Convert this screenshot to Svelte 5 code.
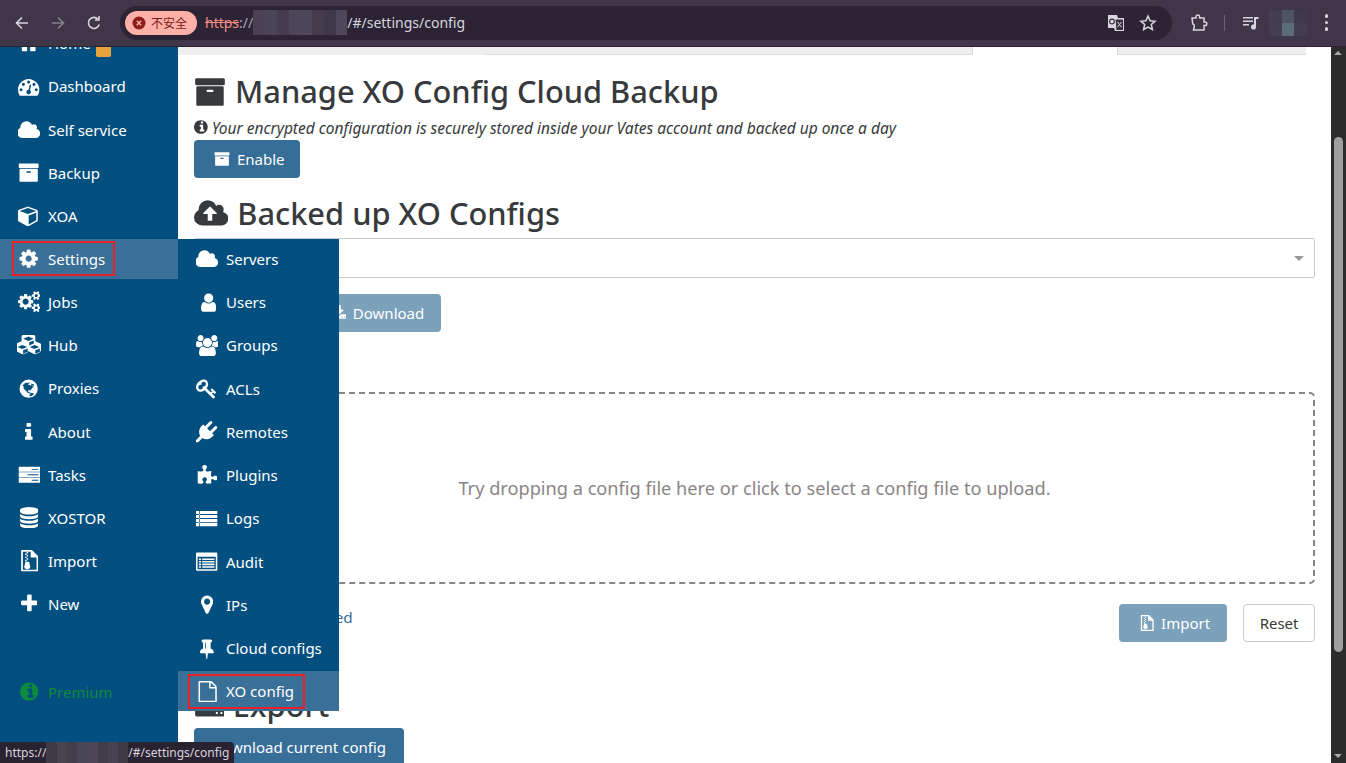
<script>
  const dot = (x, y, r) => `M${x - r} ${y}a${r} ${r} 0 1 0 ${2 * r} 0a${r} ${r} 0 1 0 ${-2 * r} 0z`;

  const icons = {
    home: [1792, "M1472 992v480q0 26-19 45t-45 19h-384v-384h-256v384h-384q-26 0-45-19t-19-45v-480q0-1 .5-3t.5-3l575-474 575 474q1 2 1 6zm223-69l-62 74q-8 9-21 11h-3q-13 0-21-7l-692-577-692 577q-12 8-24 7-13-2-21-11l-62-74q-8-10-7-23.5t11-21.5l719-599q32-26 76-26t76 26l244 204v-195q0-14 9-23t23-9h192q14 0 23 9t9 23v408l219 182q10 8 11 21.5t-7 23.5z"],
    dashboard: [1792, "M384 1152q0-53-37.5-90.5t-90.5-37.5-90.5 37.5-37.5 90.5 37.5 90.5 90.5 37.5 90.5-37.5 37.5-90.5zm192-448q0-53-37.5-90.5t-90.5-37.5-90.5 37.5-37.5 90.5 37.5 90.5 90.5 37.5 90.5-37.5 37.5-90.5zm428 481l101-382q6-26-7.5-48.5t-38.5-29.5-48 6.5-30 39.5l-101 382q-60 5-107 43.5t-63 98.5q-20 77 20 146t117 89 146-20 89-117q16-60-6-117t-72-91zm660-33q0-53-37.5-90.5t-90.5-37.5-90.5 37.5-37.5 90.5 37.5 90.5 90.5 37.5 90.5-37.5 37.5-90.5zm-640-640q0-53-37.5-90.5t-90.5-37.5-90.5 37.5-37.5 90.5 37.5 90.5 90.5 37.5 90.5-37.5 37.5-90.5zm448 192q0-53-37.5-90.5t-90.5-37.5-90.5 37.5-37.5 90.5 37.5 90.5 90.5 37.5 90.5-37.5 37.5-90.5zm320 448q0 261-141 483-19 29-54 29h-1402q-35 0-54-29-141-221-141-483 0-182 71-348t191-286 286-191 348-71 348 71 286 191 191 286 71 348z"],
    cloud: [1920, "M1856 1216q0 159-112.5 271.5t-271.5 112.5h-1088q-185 0-316.5-131.5t-131.5-316.5q0-132 71-241.5t187-163.5q-2-28-2-43 0-212 150-362t362-150q158 0 286.5 88t187.5 230q70-62 166-62 106 0 181 75t75 181q0 75-41 138 129 30 213 134.5t84 239.5z"],
    archive: [1792, "M1088 832q0-26-19-45t-45-19h-256q-26 0-45 19t-19 45 19 45 45 19h256q26 0 45-19t19-45zm576-192v960q0 26-19 45t-45 19h-1408q-26 0-45-19t-19-45v-960q0-26 19-45t45-19h1408q26 0 45 19t19 45zm64-448v256q0 26-19 45t-45 19h-1536q-26 0-45-19t-19-45v-256q0-26 19-45t45-19h1536q26 0 45 19t19 45z"],
    cube: [1792, "M896 1629l640-349v-636l-640 233v752zm-64-864l698-254-698-254-698 254zm832-252v768q0 35-18 65t-50 47l-704 384q-28 16-61 16t-61-16l-704-384q-32-17-50-47t-18-65v-768q0-40 23-73t61-47l704-256q22-8 44-8t44 8l704 256q38 14 61 47t23 73z"],
    cog: [1792, "M1152 896q0-106-75-181t-181-75-181 75-75 181 75 181 181 75 181-75 75-181zm512-109v222q0 12-8 23t-20 13l-185 28q-19 54-39 91 35 50 107 138 10 12 10 25t-9 23q-27 37-99 108t-94 71q-12 0-26-9l-138-108q-44 23-91 38-16 136-29 186-7 28-36 28h-222q-14 0-24.5-8.5t-11.5-21.5l-28-184q-49-16-90-37l-141 107q-10 9-25 9-14 0-25-11-126-114-165-168-7-10-7-23 0-12 8-23 15-21 51-66.5t54-70.5q-27-50-41-99l-183-27q-13-2-21-12.5t-8-23.5v-222q0-12 8-23t19-13l186-28q14-46 39-92-40-57-107-138-10-12-10-24 0-10 9-23 26-36 98.5-107.5t94.5-71.5q13 0 26 10l138 107q44-23 91-38 16-136 29-186 7-28 36-28h222q14 0 24.5 8.5t11.5 21.5l28 184q49 16 90 37l142-107q9-9 24-9 13 0 25 10 129 119 165 170 7 8 7 22 0 12-8 23-15 21-51 66.5t-54 70.5q26 50 41 98l183 28q13 2 21 12.5t8 23.5z"],
    cogs: [1920, "M896 896q0-106-75-181t-181-75-181 75-75 181 75 181 181 75 181-75 75-181zm768 512q0-52-38-90t-90-38-90 38-38 90q0 53 37.5 90.5t90.5 37.5 90.5-37.5 37.5-90.5zm0-1024q0-52-38-90t-90-38-90 38-38 90q0 53 37.5 90.5t90.5 37.5 90.5-37.5 37.5-90.5zm-384 421v185q0 10-7 19.5t-16 10.5l-155 24q-11 35-32 76 34 48 90 115 7 11 7 20 0 12-7 19-23 30-82.5 89.5t-78.5 59.5q-11 0-21-7l-115-90q-37 19-77 31-11 108-23 155-7 24-30 24h-186q-11 0-20-7.5t-10-17.5l-23-153q-34-10-75-31l-118 89q-7 7-20 7-11 0-21-8-144-133-144-160 0-9 7-19 10-14 41-53t47-61q-23-44-35-82l-152-24q-10-1-17-9.5t-7-19.5v-185q0-10 7-19.5t16-10.5l155-24q11-35 32-76-34-48-90-115-7-11-7-20 0-12 7-20 22-30 82-89t79-59q11 0 21 7l115 90q34-18 77-32 11-108 23-154 7-24 30-24h186q11 0 20 7.5t10 17.5l23 153q34 10 75 31l118-89q8-7 20-7 11 0 21 8 144 133 144 160 0 8-7 19-12 16-42 54t-45 60q23 48 34 82l152 23q10 2 17 10.5t7 19.5zm640 533v140q0 16-149 31-12 27-30 52 51 113 51 138 0 4-4 7-122 71-124 71-8 0-46-47t-52-68q-20 2-30 2t-30-2q-14 21-52 68t-46 47q-2 0-124-71-4-3-4-7 0-25 51-138-18-25-30-52-149-15-149-31v-140q0-16 149-31 13-29 30-52-51-113-51-138 0-4 4-7 4-2 35-20t59-34 30-16q8 0 46 46.5t52 67.5q20-2 30-2t30 2q51-71 92-112l6-2q4 0 124 70 4 3 4 7 0 25-51 138 17 23 30 52 149 15 149 31zm0-1024v140q0 16-149 31-12 27-30 52 51 113 51 138 0 4-4 7-122 71-124 71-8 0-46-47t-52-68q-20 2-30 2t-30-2q-14 21-52 68t-46 47q-2 0-124-71-4-3-4-7 0-25 51-138-18-25-30-52-149-15-149-31v-140q0-16 149-31 13-29 30-52-51-113-51-138 0-4 4-7 4-2 35-20t59-34 30-16q8 0 46 46.5t52 67.5q20-2 30-2t30 2q51-71 92-112l6-2q4 0 124 70 4 3 4 7 0 25-51 138 17 23 30 52 149 15 149 31z"],
    cubes: [2048, "M512 1632l384-192v-315l-384 164v343zm-64-455l404-173-404-173-404 173zm1088 455l384-192v-315l-384 164v343zm-64-455l404-173-404-173-404 173zm-448-293l384-165v-266l-384 164v267zm-64-379l441-189-441-189-441 189zm1088 333v416q0 36-19 67t-52 47l-448 224q-25 14-57 14t-57-14l-448-224q-4-2-7-4-2 2-6 4l-448 224q-25 14-57 14t-57-14l-448-224q-33-16-52-47t-19-67v-416q0-38 21.5-70t56.5-48l434-186v-400q0-38 21.5-70t56.5-48l448-192q23-10 50-10t50 10l448 192q35 16 56.5 48t21.5 70v400l434 186q36 16 57 48t21 70z"],
    globe: [1792, dot(896, 896, 768) + "M1170 649c-30 10-10 25 20 10 40-10 100-30 110-10l40-15 30-10 2-22-24-28-20-5-25-30-20-30-30 5-30-5-20-15-30-20-67-5 10 40-12 25 25 40-32 28 12 35-20 20-24-5-30-30-16-30-50-5-41-26-58-4-19-12 5-31 25-35 50-11 22-34 28 0 30 5 8-31-5-17-35 5-26 28-21-5-15-27-16 15-35-15-8-27-40-1 16 20 20 15-25 15 0 24-9-17-7-17-25 6-36 3-13-8 4-22-21-18-94 41 35-12 42-7 25 20-30-1-22 12 5 18-26-21-37-5c-146 80-235 222-235 222l17 17 14 14 58 24 21 21-10 18-18-9 7 31-12 75 28 54 28 52 40 34 24 33 24 44 20 34 18 21 13 22 11 2-24-62-22-44 14 1 18 12 14 36 29 32 14 33 37 29 13 50 21 23 29 15 40 22 30 4 28-6 50 36 55 11 23 30 27 30 25-9 25 2-63-30-9-20 3-16 10-16-15-33-22-3-17-9-15-1 6-40 17-39-22-12-26 20-17 29-33 7-46-34-10-63 3-50 19-20 22-2-8-6 56-3 22-2-3-23 29 9 33 10 21-1 12 24 19 44 15-7-1-36-1-26-18-12 16-37 23-18 27-8 15-35 11-9-12-10 9-16 15-21 21 2-7-16 36-13 9-14 6-12 28-9 17-11c18 2 31-11 31-11l-6-20-18-15 22-2-7-16-43 12zM1007 1526c206-36 351-189 351-189l-25-8-24-8-2-13-20-17-21-15-18-7-24 8-20 7-36-22-27-14-17 7-8 28 0-30-10-13-34 13-29 21-14 20-17-3-21-12 9 73c7 31-12 48-12 48l-29 40 12 26-15 42z"],
    info: [640, "M640 1376v128q0 26-19 45t-45 19h-512q-26 0-45-19t-19-45v-128q0-26 19-45t45-19h64v-384h-64q-26 0-45-19t-19-45v-128q0-26 19-45t45-19h384q26 0 45 19t19 45v576h64q26 0 45 19t19 45zm-128-1152v192q0 26-19 45t-45 19h-256q-26 0-45-19t-19-45v-192q0-26 19-45t45-19h256q26 0 45 19t19 45z"],
    tasks: [1920, "M64 230h1792v430H64zM1150 410h560v70h-560zM64 690h1792v430H64zM800 870h910v70H800zM64 1150h1792v430H64zM1150 1330h560v70h-560z"],
    database: [1536, "M768 768q237 0 443-43t325-127v170q0 69-103 128t-280 93.5-385 34.5-385-34.5-280-93.5-103-128v-170q119 84 325 127t443 43zm0 768q237 0 443-43t325-127v170q0 69-103 128t-280 93.5-385 34.5-385-34.5-280-93.5-103-128v-170q119 84 325 127t443 43zm0-384q237 0 443-43t325-127v170q0 69-103 128t-280 93.5-385 34.5-385-34.5-280-93.5-103-128v-170q119 84 325 127t443 43zm0-1152q208 0 385 34.5t280 93.5 103 128v128q0 69-103 128t-280 93.5-385 34.5-385-34.5-280-93.5-103-128v-128q0-69 103-128t280-93.5 385-34.5z"],
    zip: [1536, "M96 0H1000L1536 520V1792H96zM240 140V1650H1390V640H900V140zM560 170h130v120H560zM430 300h130v120H430zM560 430h130v120H560zM430 560h130v120H430zM560 690h130v120H560zM430 820h130v120H430zM460 980H760L860 1380a240 220 0 1 1-500 0z"],
    plus: [1408, "M1408 736v192q0 40-28 68t-68 28h-416v416q0 40-28 68t-68 28h-192q-40 0-68-28t-28-68v-416h-416q-40 0-68-28t-28-68v-192q0-40 28-68t68-28h416v-416q0-40 28-68t68-28h192q40 0 68 28t28 68v416h416q40 0 68 28t28 68z"],
    user: [1536, "M1536 1399q0 109-62.5 187t-150.5 78h-854q-88 0-150.5-78t-62.5-187q0-85 8.5-160.5t31.5-152 58.5-131 94-89 134.5-34.5q131 128 313 128t313-128q76 0 134.5 34.5t94 89 58.5 131 31.5 152 8.5 160.5zm-256-887q0 159-112.5 271.5t-271.5 112.5-271.5-112.5-112.5-271.5 112.5-271.5 271.5-112.5 271.5 112.5 112.5 271.5z"],
    users: [1920, "M593 896q-162 5-265 128h-134q-82 0-138-40.5t-56-118.5q0-353 124-353 6 0 43.5 21t97.5 42.5 119 21.5q67 0 133-23-5 37-5 66 0 139 81 256zm1071 637q0 120-73 189.5t-194 69.5h-874q-121 0-194-69.5t-73-189.5q0-53 3.5-103.5t14-109 26.5-108.5 43-97.5 62-81 85.5-53.5 111.5-20q10 0 43 21.5t73 48 107 48 135 21.5 135-21.5 107-48 73-48 43-21.5q61 0 111.5 20t85.5 53.5 62 81 43 97.5 26.5 108.5 14 109 3.5 103.5zm-1024-1277q0 106-75 181t-181 75-181-75-75-181 75-181 181-75 181 75 75 181zm704 384q0 159-112.5 271.5t-271.5 112.5-271.5-112.5-112.5-271.5 112.5-271.5 271.5-112.5 271.5 112.5 112.5 271.5zm576 225q0 78-56 118.5t-138 40.5h-134q-103-123-265-128 81-117 81-256 0-29-5-66 66 23 133 23 59 0 119-21.5t97.5-42.5 43.5-21q124 0 124 353zm-128-609q0 106-75 181t-181 75-181-75-75-181 75-181 181-75 181 75 75 181z"],
    key: [1792, "M832 512q0-80-56-136t-136-56-136 56-56 136q0 42 19 83-41-19-83-19-80 0-136 56t-56 136 56 136 136 56 136-56 56-136q0-42-19-83 41 19 83 19 80 0 136-56t56-136zm851 704q0 17-49 66t-66 49q-9 0-28.5-16t-36.5-33-38.5-40-24.5-26l-96 96 220 220q28 28 28 68 0 42-39 81t-81 39q-40 0-68-28l-671-671q-176 131-365 131-163 0-265.5-102.5t-102.5-265.5q0-160 95-313t248-248 313-95q163 0 265.5 102.5t102.5 265.5q0 189-131 365l355 355 96-96q-3-3-26-24.5t-40-38.5-33-36.5-16-28.5q0-17 49-66t66-49q13 0 23 10 6 6 46 44.5t82 79.5 86.5 86 73 78 28.5 41z"],
    plug: [1792, "M1755 453q37 38 37 90.5t-37 90.5l-401 400 150 150-160 160q-163 163-389.5 186.5t-411.5-100.5l-362 362h-181v-181l362-362q-124-185-100.5-411.5t186.5-389.5l160-160 150 150 400-401q38-37 91-37t90 37 37 90.5-37 90.5l-400 401 234 234 401-400q38-37 91-37t90 37z"],
    puzzle: [1728, "M1728 1098q0 81-44.5 135t-123.5 54q-41 0-77.5-17.5t-59-38-56.5-38-71-17.5q-110 0-110 124 0 39 16 115t15 115v5q-22 0-33 1-34 3-97.5 11.5t-115.5 13.5-98 5q-61 0-103-26.5t-42-83.5q0-37 17.5-71t38-56.5 38-59 17.5-77.5q0-79-54-123.5t-135-44.5q-84 0-143 45.5t-59 127.5q0 43 15 83t33.5 64.5 33.5 53 15 50.5q0 45-46 89-37 35-117 35-95 0-245-24-9-2-27.5-4t-27.5-4l-13-2q-2 0-5-1-3 0-4-1v-1024q2 1 17.5 3.5t34 5 21.5 3.5q150 24 245 24 80 0 117-35 46-44 46-89 0-22-15-50.5t-33.5-53-33.5-64.5-15-83q0-82 59-127.5t144-45.5q80 0 134 44.5t54 123.5q0 41-17.5 77.5t-38 59-38 56.5-17.5 71q0 57 42 83.5t103 26.5q64 0 180-15t163-17v2q-1 2-3.5 17.5t-5 34-3.5 21.5q-24 150-24 245 0 80 35 117 44 46 89 46 22 0 50.5-15t53-33.5 64.5-33.5 83-15q82 0 127.5 59t45.5 143z"],
    list: [1792, "M0 250h1792v260H0zM0 590h1792v260H0zM0 930h1792v260H0zM0 1270h1792v260H0zM270 250h60v1280h-60z"],
    listalt: [1792, "M96 128H1696Q1792 128 1792 224V1568Q1792 1664 1696 1664H96Q0 1664 0 1568V224Q0 128 96 128zM130 480V1530H1660V480zM240 620h190v130H240zM520 620h1030v130H520zM240 840h190v130H240zM520 840h1030v130H520zM240 1060h190v130H240zM520 1060h1030v130H520zM240 1280h190v130H240zM520 1280h1030v130H520z"],
    marker: [1024, "M768 640q0-106-75-181t-181-75-181 75-75 181 75 181 181 75 181-75 75-181zm256 0q0 109-33 179l-364 774q-16 33-47.5 52t-67.5 19-67.5-19-46.5-52l-365-774q-33-70-33-179 0-212 150-362t362-150 362 150 150 362z"],
    tack: [1152, "M480 864v-448q0-14-9-23t-23-9-23 9-9 23v448q0 14 9 23t23 9 23-9 9-23zm672 352q0 26-19 45t-45 19h-429l-51 483q-2 12-10.5 20.5t-20.5 8.5h-1q-27 0-32-27l-76-485h-404q-26 0-45-19t-19-45q0-123 78.5-221.5t177.5-98.5v-512q-52 0-90-38t-38-90 38-90 90-38h640q52 0 90 38t38 90-38 90-90 38v512q99 0 177.5 98.5t78.5 221.5z"],
    file: [1664, "M1596 380q28 28 48 76t20 88v1152q0 40-28 68t-68 28h-1344q-40 0-68-28t-28-68v-1600q0-40 28-68t68-28h896q40 0 88 20t76 48zm-444-244v376h376q-10-29-22-41l-313-313q-12-12-41-22zm384 1528v-1024h-416q-40 0-68-28t-28-68v-416h-768v1536h1280z"],
    infocircle: [1536, "M1152 1376v-160q0-14-9-23t-23-9h-96v-512q0-14-9-23t-23-9h-320q-14 0-23 9t-9 23v160q0 14 9 23t23 9h96v320h-96q-14 0-23 9t-9 23v160q0 14 9 23t23 9h448q14 0 23-9t9-23zm-128-896v-160q0-14-9-23t-23-9h-192q-14 0-23 9t-9 23v160q0 14 9 23t23 9h192q14 0 23-9t9-23zm512 416q0 209-103 385.5t-279.5 279.5-385.5 103-385.5-103-279.5-279.5-103-385.5 103-385.5 279.5-279.5 385.5-103 385.5 103 279.5 279.5 103 385.5z"],
    upload: [1920, "M1280 864q0-14-9-23l-352-352q-9-9-23-9t-23 9l-351 351q-10 12-10 24 0 14 9 23t23 9h224v352q0 13 9.5 22.5t22.5 9.5h192q13 0 22.5-9.5t9.5-22.5v-352h224q13 0 22.5-9.5t9.5-22.5zm640 288q0 159-112.5 271.5t-271.5 112.5h-1088q-185 0-316.5-131.5t-131.5-316.5q0-130 70-240t188-165q-2-30-2-43 0-212 150-362t362-150q156 0 285.5 87t188.5 231q71-62 166-62 106 0 181 75t75 181q0 76-41 138 130 31 213.5 135.5t83.5 238.5z"],
    download: [1664, "M1344 1344q0-26-19-45t-45-19-45 19-19 45 19 45 45 19 45-19 19-45zm256 0q0-26-19-45t-45-19-45 19-19 45 19 45 45 19 45-19 19-45zm128-224v320q0 40-28 68t-68 28h-1472q-40 0-68-28t-28-68v-320q0-40 28-68t68-28h465l135 136q58 56 136 56t136-56l136-136h464q40 0 68 28t28 68zm-325-569q17 41-14 70l-448 448q-18 19-45 19t-45-19l-448-448q-31-29-14-70 17-39 59-39h256v-448q0-26 19-45t45-19h256q26 0 45 19t19 45v448h256q42 0 59 39z"],
  };

  const menu = [
    { name: "Home", icon: "home", badge: true },
    { name: "Dashboard", icon: "dashboard" },
    { name: "Self service", icon: "cloud" },
    { name: "Backup", icon: "archive" },
    { name: "XOA", icon: "cube" },
    { name: "Settings", icon: "cog", active: true },
    { name: "Jobs", icon: "cogs" },
    { name: "Hub", icon: "cubes" },
    { name: "Proxies", icon: "globe" },
    { name: "About", icon: "info" },
    { name: "Tasks", icon: "tasks" },
    { name: "XOSTOR", icon: "database" },
    { name: "Import", icon: "zip" },
    { name: "New", icon: "plus" },
  ];

  const settings = [
    { name: "Servers", icon: "cloud" },
    { name: "Users", icon: "user" },
    { name: "Groups", icon: "users" },
    { name: "ACLs", icon: "key" },
    { name: "Remotes", icon: "plug" },
    { name: "Plugins", icon: "puzzle" },
    { name: "Logs", icon: "list" },
    { name: "Audit", icon: "listalt" },
    { name: "IPs", icon: "marker" },
    { name: "Cloud configs", icon: "tack" },
    { name: "XO config", icon: "file", active: true },
  ];

  // blurred host name in the address bar and the status bubble
  const mosaic = ["#4a4254", "#4b4356", "#453d4f", "#4d4558", "#4e4659", "#443c4d", "#3f3848", "#4f475b"];
  const statusMosaic = ["#3f3a48", "#4a4352", "#443d4c", "#474756", "#4d4857", "#453c49", "#484253", "#3e3a48"];
</script>

{#snippet icon(name, em = 16)}
  {@const [w, d] = icons[name]}
  <svg class="fa" width={(w / 1792) * em} height={em} viewBox={`0 0 ${w} 1792`} fill="currentColor" aria-hidden="true">
    <path fill-rule="evenodd" {d} />
  </svg>
{/snippet}

{#snippet navRow(item)}
  <a class="link" class:active={item.active} href="#/">
    <span class="inner" class:marked={item.active}>
      <span class="slot">{@render icon(item.icon, 21.33)}</span>
      <span>{item.name}</span>
      {#if item.badge}<span class="badge"></span>{/if}
    </span>
  </a>
{/snippet}

<div class="window">
  <header class="chrome">
    <button class="tool" aria-label="Back">
      <svg width="16" height="16" viewBox="0 0 16 16" fill="none" stroke="currentColor" stroke-width="1.6"><path d="M14 8H2.5M8 2.5 2.5 8 8 13.5" /></svg>
    </button>
    <button class="tool dim" aria-label="Forward">
      <svg width="16" height="16" viewBox="0 0 16 16" fill="none" stroke="currentColor" stroke-width="1.6"><path d="M2 8h11.5M8 2.5 13.5 8 8 13.5" /></svg>
    </button>
    <button class="tool" aria-label="Reload">
      <svg width="16" height="16" viewBox="0 0 16 16" fill="none" stroke="currentColor" stroke-width="1.6"><path d="M13.2 9.5A5.5 5.5 0 1 1 12 4.2" /><path d="M13 1v4H9" /></svg>
    </button>
    <div class="omnibox">
      <span class="chip">
        <svg width="14" height="14" viewBox="0 0 14 14"><circle cx="7" cy="7" r="6.5" fill="#8c1d18" /><path d="M4.8 4.8l4.4 4.4M9.2 4.8 4.8 9.2" stroke="#fcb0a8" stroke-width="1.4" /></svg>
        不安全
      </span>
      <span class="url"><s>https</s><span class="faint">://</span><span class="blur">{#each mosaic as c}<i style:background={c}></i>{/each}</span>/#/settings/config</span>
      <span class="spacer"></span>
      <svg class="omni-icon" width="18" height="18" viewBox="0 0 18 18">
        <path d="M1 1h9l1 3h6v13H8l-1-3H1z" fill="#d9d4de" /><path d="M8 5h8.5v11.5H9z" fill="#3a3143" stroke="#d9d4de" /><circle cx="5" cy="7.5" r="2.4" fill="none" stroke="#3a3143" stroke-width="1.1" /><path d="M10.5 8l4 5M14.5 8l-4 5" stroke="#d9d4de" />
      </svg>
      <svg class="omni-icon star" width="18" height="18" viewBox="0 0 18 18" fill="none" stroke="#d9d4de" stroke-width="1.5"><path d="M9 2l2.1 4.7 5 .5-3.8 3.3 1.1 5L9 13l-4.4 2.5 1.1-5L1.9 7.2l5-.5z" /></svg>
    </div>
    <svg class="ext" width="18" height="18" viewBox="0 0 18 18" fill="none" stroke="#d9d4de" stroke-width="1.5"><path d="M2 4h4V2.8a1.8 1.8 0 0 1 3.6 0V4H14v4h1a1.8 1.8 0 0 1 0 3.6h-1V16H3.5l.8-3.5a2 2 0 0 0-2-2.5H2.8z" /></svg>
    <span class="divider"></span>
    <svg class="media" width="16" height="14" viewBox="0 0 16 14" fill="#d9d4de"><path d="M0 1h10v1.5H0zM0 4.500h10V6H0zM0 8h6v1.5H0zM11 1h4.500v2H13v8a2.500 2.500 0 1 1-2-2.400z" /></svg>
    <span class="avatar"><i></i><i></i><i></i><i></i><i></i><i></i></span>
    <span class="dots"><i></i><i></i><i></i></span>
  </header>

  <div class="page">
    <nav class="sidebar">
      <ul class="nav">
        {#each menu as item}
          <li class:flyout-host={item.active}>
            {@render navRow(item)}
            {#if item.active}
              <ul class="flyout">
                {#each settings as sub}
                  <li>{@render navRow(sub)}</li>
                {/each}
              </ul>
            {/if}
          </li>
        {/each}
      </ul>
      <div class="premium">
        <span class="slot">{@render icon("infocircle", 21.33)}</span>
        <span>Premium</span>
      </div>
    </nav>

    <main class="content">
      <div class="tabs">
        <span class="tab plain"></span>
        <span class="tab ruled left"></span>
        <span class="tab current"></span>
        <span class="tab ruled right"></span>
      </div>

      <div class="body">
        <h2>{@render icon("archive", 32)}<span>Manage XO Config Cloud Backup</span></h2>
        <p class="hint">{@render icon("infocircle", 16)} <em>Your encrypted configuration is securely stored inside your Vates account and backed up once a day</em></p>
        <button class="btn primary">{@render icon("archive", 16)} Enable</button>

        <h2 class="next">{@render icon("upload", 32)}<span>Backed up XO Configs</span></h2>
        <div class="select"><span class="caret"></span></div>
        <div class="actions">
          <button class="btn primary off restore">Restore</button>
          <button class="btn primary off">{@render icon("download", 16)} Download</button>
        </div>

        <h2 class="next">{@render icon("download", 32)}<span>Import</span></h2>
        <div class="dropzone">Try dropping a config file here or click to select a config file to upload.</div>
        <div class="footer-row">
          <span class="status">No config file selected</span>
          <span class="spacer"></span>
          <button class="btn primary off import">{@render icon("zip", 16)} Import</button>
          <button class="btn ghost">Reset</button>
        </div>

        <h2 class="export">{@render icon("download", 32)}<span>Export</span></h2>
        <button class="btn primary wide">Download current config</button>
      </div>
    </main>

    <div class="scrollbar">
      <span class="arrow up"></span>
      <span class="thumb"></span>
      <span class="arrow down"></span>
    </div>
  </div>

  <div class="statusbubble">https://<span class="blur">{#each statusMosaic as c}<i style:background={c}></i>{/each}</span>/#/settings/config</div>
</div>

<style>
  :global(body) {
    margin: 0;
    overflow: hidden;
    font-family: "Noto Sans", "Open Sans", sans-serif;
    font-size: 15px;
    color: #373a3c;
    background: #fff;
  }

  .window {
    position: relative;
    display: flex;
    flex-direction: column;
    width: 1346px;
    height: 763px;
    overflow: hidden;
  }

  .fa {
    display: inline-block;
    vertical-align: -0.12em;
    flex: none;
  }

  /* browser toolbar */
  .chrome {
    position: relative;
    z-index: 10;
    flex: none;
    display: flex;
    align-items: center;
    box-sizing: border-box;
    height: 47px;
    padding: 0 0 1px 4px;
    background: #3f364a;
    border-bottom: 1px solid #2b2430;
    color: #d9d4de;
  }

  .tool {
    display: grid;
    place-items: center;
    width: 36px;
    height: 32px;
    padding: 0;
    border: 0;
    background: none;
    color: inherit;
  }

  .tool.dim {
    color: #86808e;
  }

  .omnibox {
    display: flex;
    align-items: center;
    box-sizing: border-box;
    width: 1052px;
    height: 34px;
    margin-left: 8px;
    padding: 0 15px 0 5px;
    border-radius: 17px;
    background: #2c2435;
    font-size: 14px;
  }

  .chip {
    display: flex;
    align-items: center;
    gap: 5px;
    box-sizing: border-box;
    width: 72px;
    height: 24px;
    padding-left: 7px;
    border-radius: 12px;
    background: #fcb0a8;
    color: #7a1a15;
    font-size: 12px;
    font-family: "Noto Sans CJK SC", "Noto Sans", sans-serif;
  }

  .url {
    display: flex;
    align-items: center;
    margin-left: 8px;
    color: #d9d4de;
  }

  .url s {
    color: #f28b82;
  }

  .faint {
    color: #a8a2b0;
  }

  .blur {
    display: inline-flex;
    height: 25px;
  }

  .blur i {
    width: 11.75px;
  }

  .spacer {
    flex: 1;
  }

  .omni-icon {
    flex: none;
  }

  .star {
    margin-left: 14px;
  }

  .ext {
    margin-left: 18px;
  }

  .divider {
    width: 1px;
    height: 16px;
    margin-left: 16px;
    background: #6a6272;
  }

  .media {
    margin-left: 18px;
  }

  .avatar {
    display: grid;
    grid-template-columns: repeat(3, 12.5px);
    grid-auto-rows: 13px;
    margin-left: 10px;
  }

  .avatar i:nth-child(1) { background: #443c4f; }
  .avatar i:nth-child(2) { background: #4e5265; }
  .avatar i:nth-child(3) { background: #40384b; }
  .avatar i:nth-child(4) { background: #463e52; }
  .avatar i:nth-child(5) { background: #5c6c78; }
  .avatar i:nth-child(6) { background: #443c4f; }

  .dots {
    display: flex;
    flex-direction: column;
    gap: 3px;
    margin-left: 18px;
  }

  .dots i {
    width: 3.5px;
    height: 3.5px;
    border-radius: 50%;
    background: #d9d4de;
  }

  /* page */
  .page {
    flex: 1;
    display: flex;
    min-height: 0;
  }

  .sidebar {
    flex: none;
    width: 178px;
    background: #034f7f;
    color: #fff;
  }

  .nav {
    list-style: none;
    display: flex;
    flex-direction: column;
    gap: 3.15px;
    margin: -23.75px 0 0;
    padding: 0;
  }

  .nav > li,
  .flyout > li {
    height: 40px;
  }

  .flyout-host {
    position: relative;
  }

  .flyout {
    position: absolute;
    z-index: 5;
    top: 0;
    left: 100%;
    width: 161px;
    display: flex;
    flex-direction: column;
    gap: 3.25px;
    margin: 0;
    padding: 0;
    list-style: none;
    background: #034f7f;
  }

  .link {
    display: flex;
    align-items: center;
    height: 100%;
    padding-left: 12px;
    color: #fff;
    text-decoration: none;
  }

  .flyout .link {
    padding-left: 10px;
  }

  .link.active {
    background: #3a6f97;
  }

  .inner {
    position: relative;
    display: inline-flex;
    align-items: center;
    box-sizing: border-box;
    height: 35px;
    padding: 0 8px 0 3px;
    border: 2px solid transparent;
  }

  .flyout .inner {
    padding: 0 9px 0 5px;
  }

  .inner.marked {
    border-color: #e8202a;
  }

  .slot {
    display: grid;
    place-items: center;
    width: 24px;
    margin-right: 7px;
    flex: none;
  }

  .badge {
    position: absolute;
    left: 82px;
    top: 17px;
    width: 15px;
    height: 12px;
    border-radius: 2px;
    background: #e8a33d;
  }

  .premium {
    display: flex;
    align-items: center;
    height: 40px;
    margin-top: 48px;
    padding-left: 17px;
    color: #0e8a3c;
  }

  /* right pane */
  .content {
    flex: 1;
    min-width: 0;
    overflow: hidden;
  }

  .tabs {
    display: flex;
    height: 8px;
  }

  .tab {
    box-sizing: border-box;
    height: 8px;
    background: #eeeeee;
  }

  .tab.plain { width: 308px; }
  .tab.ruled { border-bottom: 1px solid #dddddd; }
  .tab.left { width: 487px; border-right: 1px solid #dddddd; }
  .tab.current { width: 144px; background: #fff; }
  .tab.right { width: 189px; border-left: 1px solid #dddddd; }

  .body {
    padding: 0 16px;
  }

  h2 {
    display: flex;
    align-items: center;
    gap: 9px;
    margin: 19px 0 6.4px;
    font-size: 30.8px;
    font-weight: 500;
    line-height: 35.2px;
    white-space: nowrap;
  }

  h2.next {
    margin-top: 18.4px;
  }

  h2.export {
    margin: 46px 0 5px;
  }

  .hint {
    margin: 0;
    font-size: 15.5px;
    line-height: 24px;
    white-space: nowrap;
  }

  .btn {
    display: inline-flex;
    align-items: center;
    justify-content: center;
    gap: 7px;
    box-sizing: border-box;
    height: 38px;
    padding: 0 14px 0 19px;
    border: 1px solid transparent;
    border-radius: 4px;
    font: inherit;
  }

  .primary {
    background: #366e97;
    color: #fff;
  }

  .primary.off {
    background: #7ca1bb;
  }

  .import {
    padding: 0 16px 0 20px;
  }

  .wide {
    justify-content: flex-end;
    width: 210px;
    padding: 0 17px 0 0;
  }

  .ghost {
    padding: 0 15.5px;
    border-color: #cccccc;
    background: #fff;
    color: #373a3c;
  }

  .select {
    position: relative;
    box-sizing: border-box;
    height: 40px;
    border: 1px solid #cccccc;
    border-radius: 2px;
  }

  .caret {
    position: absolute;
    right: 10px;
    top: 17px;
    border: 5px solid transparent;
    border-top: 5px solid #999999;
    border-bottom: 0;
  }

  .actions {
    display: flex;
    gap: 16px;
    margin-top: 16px;
  }

  .restore {
    width: 101px;
  }

  .actions .btn:last-child {
    padding-right: 16px;
  }

  .dropzone {
    display: grid;
    place-items: center;
    box-sizing: border-box;
    height: 192px;
    border: 2px dashed #8a8585;
    border-radius: 5px;
    color: #8a8585;
    font-size: 18.2px;
  }

  .footer-row {
    display: flex;
    align-items: flex-start;
    gap: 16px;
    margin-top: 20px;
  }

  .status {
    color: #366e97;
    font-size: 15.3px;
    line-height: 26px;
  }

  /* scrollbar */
  .scrollbar {
    position: relative;
    flex: none;
    width: 15px;
    background: #2c2c2c;
  }

  .thumb {
    position: absolute;
    top: 90px;
    left: 3px;
    width: 9px;
    height: 515px;
    border-radius: 5px;
    background: #9f9f9f;
  }

  .arrow {
    position: absolute;
    left: 3px;
    border: 4.5px solid transparent;
  }

  .arrow.up {
    top: 4px;
    border-bottom-color: #a8a8a8;
    border-top: 0;
  }

  .arrow.down {
    bottom: 5px;
    border-top-color: #a8a8a8;
    border-bottom: 0;
  }

  .statusbubble {
    position: absolute;
    left: 0;
    bottom: 0;
    z-index: 8;
    display: flex;
    align-items: center;
    box-sizing: border-box;
    width: 234px;
    height: 21px;
    padding-left: 5px;
    border-top-right-radius: 4px;
    background: #292231;
    color: #d9d4de;
    font-size: 12px;
    white-space: nowrap;
  }

  .statusbubble .blur {
    height: 21px;
  }

  .statusbubble .blur i {
    width: 10.25px;
  }
</style>
